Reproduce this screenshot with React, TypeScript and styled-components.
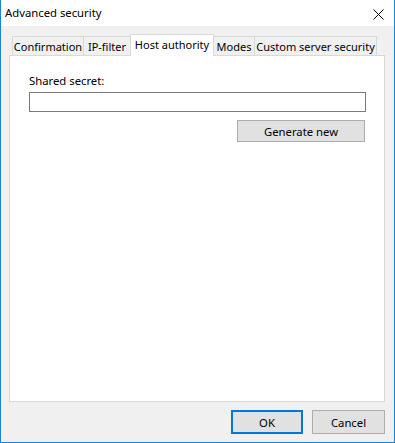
import React from 'react';
import styled, { createGlobalStyle } from 'styled-components';

const GlobalStyle = createGlobalStyle`
  html, body {
    margin: 0;
    padding: 0;
    background: #ffffff;
  }
  body {
    font-family: 'Noto Sans', 'Liberation Sans', Arial, sans-serif;
    font-size: 11.3px;
    color: #000000;
  }
  * {
    box-sizing: border-box;
  }
`;

const StyledWindow = styled.div`
  width: 395px;
  height: 443px;
  display: flex;
  flex-direction: column;
  background: #f0f0f0;
  border: 1px solid #1883d7;
  border-top: none;
`;

const TitleBar = styled.div`
  height: 26px;
  display: flex;
  align-items: center;
  justify-content: space-between;
  background: #ffffff;
  padding-left: 4px;
  padding-right: 10px;

  .title {
    font-size: 11.3px;
    line-height: 16px;
    margin-top: -1px;
  }
`;

const CloseButton = styled.div`
  width: 11px;
  height: 11px;
  display: flex;
  align-items: center;
  justify-content: center;
  margin-top: 2px;
`;

const Body = styled.div`
  flex: 1;
  display: flex;
  flex-direction: column;
  padding: 8px 9px 0 8px;
`;

const TabStrip = styled.div`
  display: flex;
  align-items: flex-end;
  height: 21px;
  padding-left: 3px;
  position: relative;
  z-index: 1;
`;

const Tab = styled.div<{ $width: number; $active?: boolean }>`
  width: ${(p) => p.$width}px;
  height: ${(p) => (p.$active ? 22 : 19)}px;
  margin-bottom: ${(p) => (p.$active ? -1 : 0)}px;
  display: flex;
  align-items: center;
  justify-content: center;
  padding-bottom: ${(p) => (p.$active ? 3 : 0)}px;
  background: ${(p) => (p.$active ? '#ffffff' : '#f0f0f0')};
  border: 1px solid #d9d9d9;
  border-bottom: none;
  font-size: 11px;
  white-space: nowrap;
  & + & {
    margin-left: -1px;
  }
`;

const Panel = styled.div`
  height: 347px;
  background: #ffffff;
  border: 1px solid #d9d9d9;
  padding: 17px 17px 0 19px;
  display: flex;
  flex-direction: column;
`;

const Label = styled.div`
  line-height: 16px;
`;

const SecretInput = styled.input`
  margin-top: 3px;
  width: 337px;
  height: 20px;
  border: 1px solid #7a7a7a;
  background: #ffffff;
  font: inherit;
  padding: 0 3px;
  outline: none;
`;

const ButtonRow = styled.div`
  display: flex;
  justify-content: flex-end;
  margin-top: 8px;
  width: 336px;
`;

const Button = styled.button<{ $width: number; $height: number; $default?: boolean }>`
  width: ${(p) => p.$width}px;
  height: ${(p) => p.$height}px;
  background: #e1e1e1;
  border: 1px solid ${(p) => (p.$default ? '#0078d7' : '#adadad')};
  box-shadow: ${(p) => (p.$default ? 'inset 0 0 0 1px #0078d7' : 'none')};
  font-family: inherit;
  font-size: 11.3px;
  color: #000000;
  padding: 0;
  margin: 0;
`;

const Footer = styled.div`
  display: flex;
  justify-content: flex-end;
  gap: 9px;
  padding: 8px 0 8px 0;
`;

const TABS = [
  { label: 'Confirmation', width: 72 },
  { label: 'IP-filter', width: 48 },
  { label: 'Host authority', width: 84, active: true },
  { label: 'Modes', width: 42 },
  { label: 'Custom server security', width: 123 },
];

const App = () => {
  const [secret, setSecret] = React.useState('');

  return (
    <StyledWindow>
      <GlobalStyle />
      <TitleBar>
        <div className="title">Advanced security</div>
        <CloseButton>
          <svg width="11" height="11" viewBox="0 0 11 11">
            <path d="M0.5 0.5 L10.5 10.5 M10.5 0.5 L0.5 10.5" stroke="#000" strokeWidth="1" fill="none" />
          </svg>
        </CloseButton>
      </TitleBar>

      <Body>
        <TabStrip>
          {TABS.map((tab) => (
            <Tab key={tab.label} $width={tab.width} $active={tab.active}>
              {tab.label}
            </Tab>
          ))}
        </TabStrip>

        <Panel>
          <Label>Shared secret:</Label>
          <SecretInput
            value={secret}
            onChange={(e) => setSecret(e.target.value)}
          />
          <ButtonRow>
            <Button $width={128} $height={22}>
              Generate new
            </Button>
          </ButtonRow>
        </Panel>

        <Footer>
          <Button $width={72} $height={24} $default>
            OK
          </Button>
          <Button $width={73} $height={24}>
            Cancel
          </Button>
        </Footer>
      </Body>
    </StyledWindow>
  );
};

export default App;
